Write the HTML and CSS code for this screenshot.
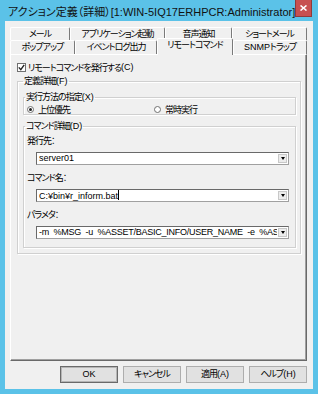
FILE: index.html
```html
<!DOCTYPE html>
<html lang="ja">
<head>
  <meta charset="UTF-8">
  <meta name="viewport" content="width=device-width, initial-scale=1.0">
  <title>アクション定義（詳細）</title>
  <link rel="stylesheet" href="styles.css">
</head>
<body>
  <div class="window">
    <!-- タイトルバー -->
    <div class="titlebar">
      <span class="title">アクション定義（詳細）[1:WIN-5IQ17ERHPCR:Administrator]</span>
      <span class="close">
        <svg width="7" height="6" viewBox="0 0 7 6"><path d="M0.5 0.5 L6.5 5.5 M6.5 0.5 L0.5 5.5" stroke="#fff" stroke-width="1.6"/></svg>
      </span>
    </div>

    <div class="client">
      <!-- タブ（2段） -->
      <div class="tabs">
        <div class="tab-row">
          <div class="tab t-mail">メール</div>
          <div class="tab t-app">アプリケーション起動</div>
          <div class="tab t-voice">音声通知</div>
          <div class="tab t-short">ショートメール</div>
        </div>
        <div class="tab-row front">
          <div class="tab t-popup">ポップアップ</div>
          <div class="tab t-event">イベントログ出力</div>
          <div class="tab t-remote active">リモートコマンド</div>
          <div class="tab t-snmp"><span class="latin">SNMP</span>トラップ</div>
        </div>
      </div>

      <!-- タブの中身 -->
      <div class="panel">
        <div class="check-row">
          <span class="checkbox">
            <svg width="7" height="7" viewBox="0 0 7 7"><path d="M0.8 3.4 L2.8 5.6 L6.2 0.8" fill="none" stroke="#222" stroke-width="1.4"/></svg>
          </span>
          リモートコマンドを発行する<span class="latin">(C)</span>
        </div>

        <fieldset class="group outer">
          <legend>定義詳細<span class="latin">(F)</span></legend>

          <fieldset class="group inner">
            <legend>実行方法の指定<span class="latin">(X)</span></legend>
            <div class="radios">
              <span class="radio-item"><span class="radio checked"></span>上位優先</span>
              <span class="radio-item"><span class="radio"></span>常時実行</span>
            </div>
          </fieldset>

          <fieldset class="group inner cmd">
            <legend>コマンド詳細<span class="latin">(D)</span></legend>
            <div class="field-label">発行先：</div>
            <div class="combo">
              <span class="combo-text">server01</span>
              <span class="combo-btn"></span>
            </div>
            <div class="field-label">コマンド名：</div>
            <div class="combo">
              <span class="combo-text">C:¥bin¥r_inform.bat<span class="caret"></span></span>
              <span class="combo-btn"></span>
            </div>
            <div class="field-label">パラメタ：</div>
            <div class="combo">
              <span class="combo-text param">-m  %MSG  -u  %ASSET/BASIC_INFO/USER_NAME  -e  %ASSET/BASIC_INFO/MAIL</span>
              <span class="combo-btn"></span>
            </div>
          </fieldset>
        </fieldset>
      </div>

      <!-- ボタン -->
      <div class="buttons">
        <div class="btn default"><span class="latin">OK</span></div>
        <div class="btn">キャンセル</div>
        <div class="btn">適用<span class="latin">(A)</span></div>
        <div class="btn">ヘルプ<span class="latin">(H)</span></div>
      </div>
    </div>
  </div>
</body>
</html>
```

FILE: styles.css
```css
/* 全体 */
* {
  box-sizing: border-box;
}

body {
  margin: 0;
  font-family: "Liberation Sans", "Noto Sans CJK JP", sans-serif;
  font-size: 9px;
  letter-spacing: -1px; /* かなを詰める */
  font-feature-settings: "palt";
  color: #000;
}

/* 英字部分は詰めない */
.latin {
  letter-spacing: 0;
}

/* ウィンドウ枠 */
.window {
  width: 318px;
  height: 394px;
  background: #5bc2e8;
  padding: 0 5px 5px 5px;
  display: flex;
  flex-direction: column;
}

/* タイトルバー */
.titlebar {
  height: 21px;
  display: flex;
  align-items: flex-start;
}

.title {
  font-size: 11px;
  letter-spacing: 0;
  line-height: 13px;
  padding: 6px 0 0 3px;
  color: #111;
  white-space: nowrap;
}

.close {
  margin-left: auto;
  margin-right: 1px;
  width: 24px;
  height: 17px;
  background: #c75050;
  border: 1px solid #8f3a3a;
  border-top: none;
  display: flex;
  justify-content: center;
  align-items: center;
}

/* 中身 */
.client {
  flex: 1;
  background: #f0f0f0;
  padding: 6px 6px 6px 5px;
  display: flex;
  flex-direction: column;
}

/* タブ */
.tab-row {
  display: flex;
  height: 13px;
}

.tab-row.front {
  height: 14px;
}

.tab {
  border-left: 1px solid #fff;
  border-top: 1px solid #fff;
  border-right: 1px solid #7a7a7a;
  border-radius: 2px 2px 0 0;
  text-align: center;
  line-height: 12px;
  white-space: nowrap;
}

.t-mail { width: 60px; }
.t-app { width: 95px; }
.t-voice { width: 67px; }
.t-short { width: 75px; }
.t-popup { width: 65px; }
.t-event { width: 82px; }
.t-remote { width: 76px; }
.t-snmp { width: 74px; }

.tab.active {
  margin-top: -2px;
  height: 17px;
  background: #f0f0f0;
  position: relative;
  z-index: 1;
}

/* タブのページ */
.panel {
  flex: 1;
  border: 1px solid;
  border-color: #fff #696969 #696969 #fff;
  box-shadow: inset -1px -1px 0 #a0a0a0;
  padding: 6px 5px 0 6px;
}

/* チェックボックス */
.check-row {
  display: flex;
  align-items: center;
  height: 12px;
}

.checkbox {
  width: 9px;
  height: 9px;
  border: 1px solid #707070;
  background: #fff;
  margin-right: 2px;
  display: flex;
  justify-content: center;
  align-items: center;
}

/* グループボックス */
.group {
  margin: 0;
  border: 1px solid #d0d0d0;
  box-shadow: 1px 1px 0 #fff, inset 1px 1px 0 #fff;
  min-width: 0;
}

.group legend {
  padding: 0 1px;
  line-height: 12px;
}

.outer {
  margin-top: 2px;
  padding: 4px 4px 5px 5px;
}

.inner {
  padding: 0 3px 2px 3px;
}

.inner legend {
  margin-left: -2px;
}

.cmd {
  margin-top: 5px;
  padding-top: 3px;
  padding-bottom: 8px;
}

/* ラジオボタン */
.radios {
  display: grid;
  grid-template-columns: 127px auto;
  height: 9px;
  align-items: center;
}

.radio-item {
  display: flex;
  align-items: center;
}

.radio {
  width: 7px;
  height: 7px;
  border: 1px solid #707070;
  border-radius: 50%;
  background: #fff;
  margin-right: 4px;
  display: flex;
  justify-content: center;
  align-items: center;
}

.radio.checked::after {
  content: "";
  width: 3px;
  height: 3px;
  border-radius: 50%;
  background: #222;
}

/* コンボボックス */
.field-label {
  line-height: 12px;
  margin-bottom: 5px;
}

.combo {
  margin: 0 3px 7px 9px;
  height: 13px;
  display: flex;
  background: #fff;
  border: 1px solid #a0a0a0;
  border-top-color: #696969;
  border-left-color: #696969;
}

.combo:last-child {
  margin-bottom: 0;
}

.combo-text {
  flex: 1;
  overflow: hidden;
  white-space: pre;
  letter-spacing: 0;
  line-height: 11px;
  padding-left: 2px;
}

.combo-text.param {
  letter-spacing: -0.25px;
}

.caret {
  display: inline-block;
  width: 1px;
  height: 10px;
  background: #000;
  vertical-align: -1px;
}

.combo-btn {
  width: 9px;
  background: #ececec;
  border: 1px solid #c8c8c8;
  margin: 1px;
  display: flex;
  justify-content: center;
  align-items: center;
}

.combo-btn::after {
  content: "";
  border-left: 2px solid transparent;
  border-right: 2px solid transparent;
  border-top: 3px solid #000;
}

/* 下のボタン */
.buttons {
  display: flex;
  justify-content: flex-end;
  gap: 5px;
  margin-top: 5px;
}

.btn {
  width: 58px;
  height: 17px;
  border: 1px solid #adadad;
  background: #e1e1e1;
  text-align: center;
  line-height: 15px;
}

.btn.default {
  border-color: #6a6a6a;
  box-shadow: inset 0 0 0 1px #b5b5b5;
}
```
